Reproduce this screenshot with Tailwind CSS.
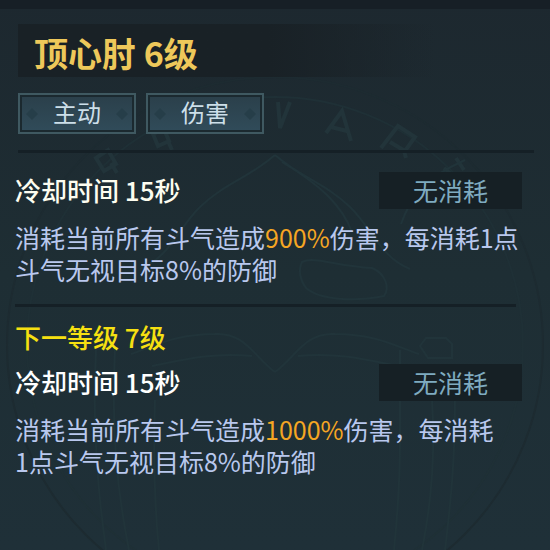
<!DOCTYPE html>
<html lang="zh-CN">
  <head>
    <meta charset="UTF-8" />
    <meta name="viewport" content="width=device-width, initial-scale=1.0" />
    <title>顶心肘</title>
    <script src="https://cdn.jsdelivr.net/npm/@tailwindcss/browser@4"></script>
  </head>
  <body class="relative min-h-screen overflow-x-hidden bg-linear-to-b from-[#1d282f] via-[#1e2e34] to-[#1f3038] font-['Noto_Sans_CJK_SC',sans-serif]">
    <!-- Faint emblem behind the panel -->
    <svg class="absolute inset-0 h-full w-full" viewBox="0 0 550 550" preserveAspectRatio="xMidYMid slice" fill="none" stroke="#21343a" stroke-width="2" aria-hidden="true">
      <circle cx="275" cy="345" r="268" stroke="#1d2b31" />
      <circle cx="275" cy="345" r="248" stroke="#1f3036" />
      <g stroke="#22343a" stroke-width="4">
        <path d="M96 158l12-8 8 14-12 7zM111 163l6 10" />
        <path d="M153 134l11-5 5 12-11 5zM168 141l4 9" />
        <path d="M278 102l2 26 10-26" />
        <path d="M326 133l16-22 9 30M331 127l16 4" />
        <path d="M381 148l17-22 17 11-10 14-15-9M404 151l2 7" />
        <path d="M444 168l16 14M456 158l8 12" />
      </g>
      <path d="M275 155c-28 24-50 28-75 52-22 21-30 50-60 62M275 155c28 24 50 28 75 52 22 21 30 50 60 62" />
      <path d="M282 162c40 24 60 44 70 70M465 160c-40 18-54 36-64 64" />
      <path d="M302 262c12-6 34 4 70 6 14 6 18 20 12 28-30 6-64 4-78-8-6-8-8-18-4-26z" />
      <path d="M275 372c20-14 30-40 60-38 40 0 60 12 84 20M275 372c-20-14-30-40-60-38-40 0-60 12-84 20" />
      <path d="M298 356c40-4 70 4 100 10M252 356c-40-4-70 4-100 10" />
      <path d="M400 350v90c0 40-2 70-6 110M455 400c0 60-4 100-10 150M432 400c4 60-2 110-10 150" />
      <path d="M96 350c-4 80 2 140 10 200M115 350c-4 80 2 140 14 200M155 400c-2 60 0 110 4 150" />
      <path d="M420 346l6-8h20l6 6v14h-24z" />
    </svg>

    <div class="relative">
      <div class="h-[9px] bg-[#171f26]"></div>

      <!-- Skill name and tags -->
      <header class="pt-[15px] pr-4 pl-[18px]">
        <h1 class="mr-[98px] bg-linear-to-r from-[#192126] from-60% to-transparent pt-1 pl-4 text-[34px]/[49px] font-bold text-[#eec85a]">顶心肘 6级</h1>
        <ul class="mt-4 flex gap-[10px]">
          <li class="border-2 border-[#3f5961] bg-[#1b292f] p-[2px]">
            <span class="flex h-[33px] items-center gap-[15px] bg-linear-to-b from-[#2b404b] to-[#304b59] px-1 pb-1 text-2xl text-[#ccdfe9]">
              <svg class="mt-1 h-3 w-3" viewBox="0 0 12 12" fill="#263e49" aria-hidden="true"><path d="M6 0l6 6-6 6-6-6z" /></svg>
              主动
              <svg class="mt-1 h-3 w-3" viewBox="0 0 12 12" fill="#263e49" aria-hidden="true"><path d="M6 0l6 6-6 6-6-6z" /></svg>
            </span>
          </li>
          <li class="border-2 border-[#3f5961] bg-[#1b292f] p-[2px]">
            <span class="flex h-[33px] items-center gap-[15px] bg-linear-to-b from-[#2b404b] to-[#304b59] px-1 pb-1 text-2xl text-[#ccdfe9]">
              <svg class="mt-1 h-3 w-3" viewBox="0 0 12 12" fill="#263e49" aria-hidden="true"><path d="M6 0l6 6-6 6-6-6z" /></svg>
              伤害
              <svg class="mt-1 h-3 w-3" viewBox="0 0 12 12" fill="#263e49" aria-hidden="true"><path d="M6 0l6 6-6 6-6-6z" /></svg>
            </span>
          </li>
        </ul>
        <hr class="mt-4 border-t-[3px] border-[#152026]" />
      </header>

      <main class="pr-7 pl-[15px]">
        <!-- Current level -->
        <section class="pt-[19px]">
          <div class="flex items-start justify-between">
            <h2 class="text-[26px]/[35px] font-medium text-[#fdfdf0]">冷却时间 15秒</h2>
            <p class="w-[143px] bg-[#162025] text-center text-[25px]/[37px] text-[#7fabc0]">无消耗</p>
          </div>
          <p class="mt-3 text-[25px]/[32px] whitespace-nowrap text-[#b9c8ee]">消耗当前所有斗气造成<span class="text-[#f5a623]">900%</span>伤害，每消耗1点<br />斗气无视目标8%的防御</p>
        </section>

        <hr class="mt-[19px] mr-[6px] border-t-[3px] border-[#152026]" />

        <!-- Next level -->
        <section class="pt-3">
          <h2 class="text-[26px]/[35px] font-medium text-[#f6e011]">下一等级 7级</h2>
          <div class="mt-[10px] flex items-start justify-between">
            <h3 class="text-[26px]/[35px] font-medium text-white">冷却时间 15秒</h3>
            <p class="w-[143px] bg-[#162025] text-center text-[25px]/[37px] text-[#7fabc0]">无消耗</p>
          </div>
          <p class="mt-3 text-[25px]/[32px] whitespace-nowrap text-[#b9c8ee]">消耗当前所有斗气造成<span class="text-[#f5a623]">1000%</span>伤害，每消耗<br />1点斗气无视目标8%的防御</p>
        </section>
      </main>
    </div>
  </body>
</html>
